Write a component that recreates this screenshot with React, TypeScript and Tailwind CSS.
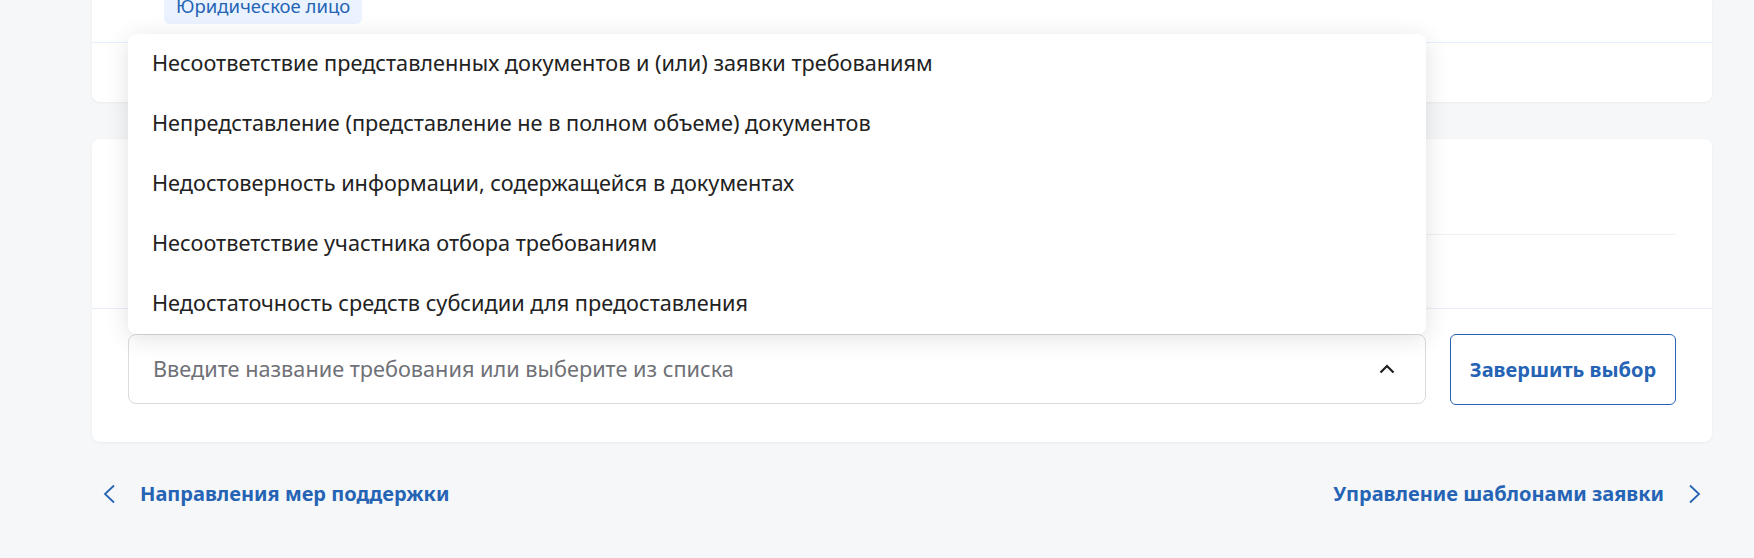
const reasons = [
  "Несоответствие представленных документов и (или) заявки требованиям",
  "Непредставление (представление не в полном объеме) документов",
  "Недостоверность информации, содержащейся в документах",
  "Несоответствие участника отбора требованиям",
  "Недостаточность средств субсидии для предоставления",
];

function ChevronUp() {
  return (
    <svg width="16" height="10" viewBox="0 0 16 10" fill="none">
      <path d="M1.5 8.5 L8 2 L14.5 8.5" stroke="#1f1f1f" strokeWidth="2.2" />
    </svg>
  );
}

function Arrow({ dir }: { dir: "left" | "right" }) {
  return (
    <svg width="14" height="20" viewBox="0 0 14 20" fill="none">
      <path
        d={dir === "left" ? "M12 1.5 L3 10 L12 18.5" : "M2 1.5 L11 10 L2 18.5"}
        stroke="#2563b5"
        strokeWidth="1.8"
      />
    </svg>
  );
}

export default function App() {
  return (
    <div
      className="h-[558px] overflow-hidden bg-[#f6f7f9] pl-[92px] pr-[42px]"
      style={{ fontFamily: '"Noto Sans", sans-serif' }}
    >
      {/* top card, cut by the window edge */}
      <section className="rounded-b-lg bg-white shadow-[0_1px_3px_rgba(0,0,0,0.05)]">
        <div className="flex h-[42px] items-end pb-[18px] pl-[72px]">
          <span className="flex h-[40px] items-end rounded-md bg-[#eaf3ff] px-3 pb-[9px] text-[18.5px] leading-none text-[#2563b5]">
            Юридическое лицо
          </span>
        </div>
        <div className="h-[60px] border-t border-[#e6efff]" />
      </section>

      <section className="mt-[37px] rounded-lg bg-white shadow-[0_1px_3px_rgba(0,0,0,0.05)]">
        <div className="px-9">
          <div className="h-[96px] border-b border-[#eef1f5]" />
          <div className="h-[73px]" />
        </div>
        <div className="flex gap-6 border-t border-[#e8eef7] px-9 pb-[37px] pt-[25px]">
          <div className="relative flex-1">
            <ul className="absolute bottom-full left-0 right-0 rounded-lg bg-white shadow-[0_4px_24px_rgba(0,0,0,0.12)]">
              {reasons.map((r) => (
                <li key={r} className="flex h-[60px] items-center px-6 pb-[2px] text-[21.7px] text-[#222]">
                  {r}
                </li>
              ))}
            </ul>
            <div className="flex h-[70px] items-center justify-between rounded-lg border border-[#d9dbe0] pl-6 pr-[30px]">
              <span className="text-[21.7px] text-[#6f7177]">
                Введите название требования или выберите из списка
              </span>
              <ChevronUp />
            </div>
          </div>
          <button className="h-[71px] w-[226px] rounded-md border border-[#2563b5] text-[20px] font-bold text-[#2563b5]">
            Завершить выбор
          </button>
        </div>
      </section>

      <nav className="mt-[37px] flex items-center justify-between pl-[10px] pr-[10px]">
        <a className="flex items-center gap-[24px] text-[20px] font-bold text-[#2563b5]">
          <Arrow dir="left" />
          Направления мер поддержки
        </a>
        <a className="flex items-center gap-[24px] text-[20px] font-bold text-[#2563b5]">
          Управление шаблонами заявки
          <Arrow dir="right" />
        </a>
      </nav>
    </div>
  );
}
